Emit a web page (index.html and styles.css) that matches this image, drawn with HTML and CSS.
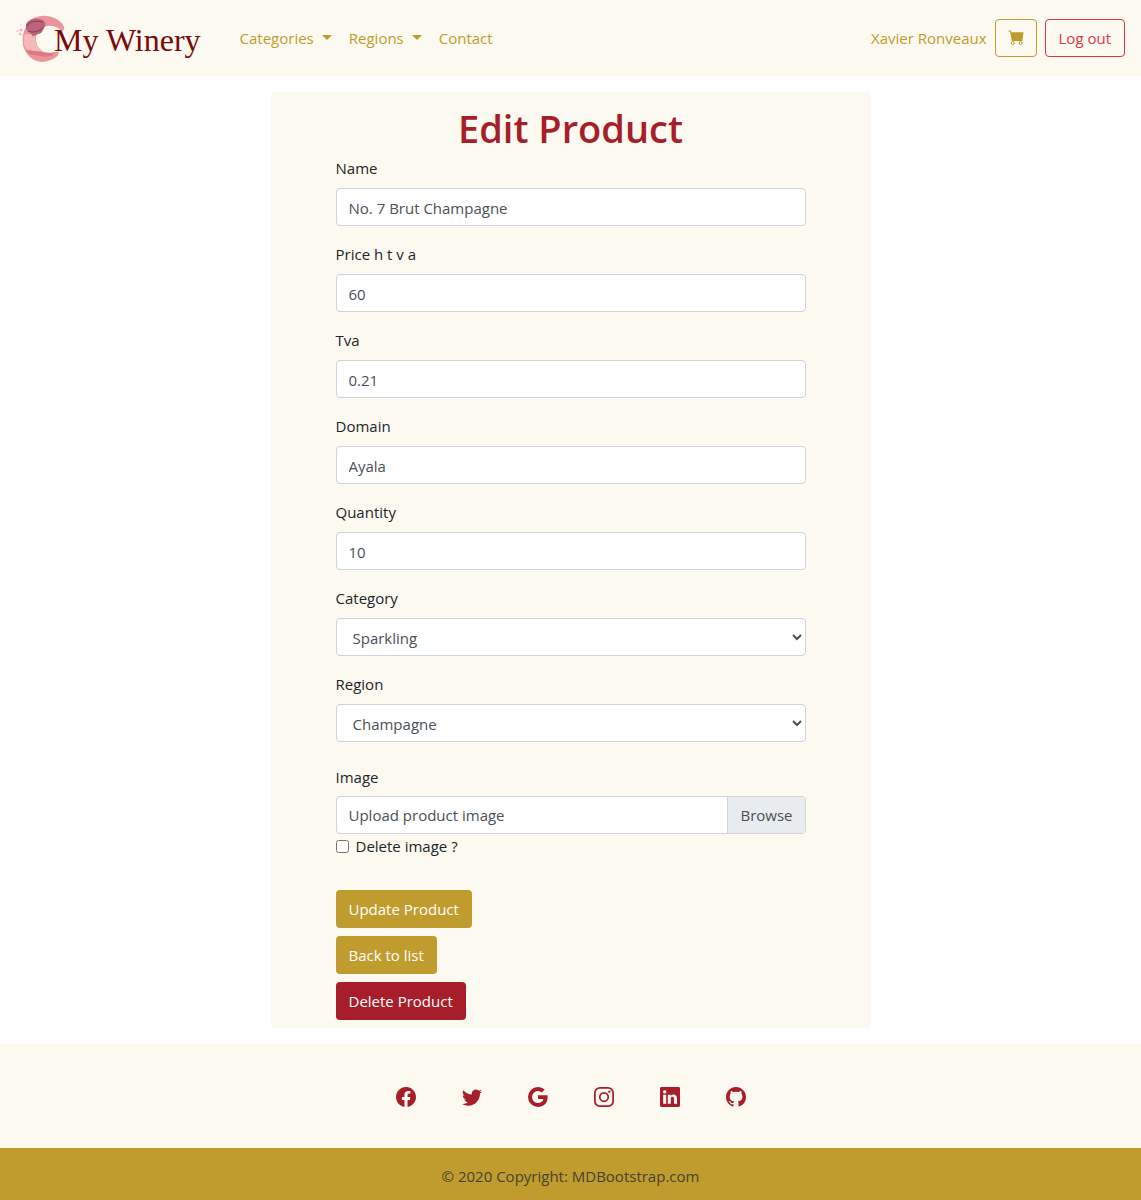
FILE: index.html
```html
<!DOCTYPE html>
<html lang="en">
<head>
<meta charset="utf-8">
<meta name="viewport" content="width=device-width, initial-scale=1">
<title>Edit Product - My Winery</title>
<link rel="stylesheet" href="styles.css">
</head>
<body>
<header class="navbar">
  <a class="brand" href="#">
    <svg class="brand-mark" viewBox="0 0 50 50" aria-hidden="true">
      <path fill="#ea959c" d="M10 14C12 8 18 4 25 3C34 2 45 6 48.500 15L47 18C42 15 37 12 32 13C24 14 20 19 20 26C20 33 24 38 30 40C35 41 38 38 43 39L42 42C39 46 32 49 25 49C16 48 9 41 7 32C6 25 7 19 10 14Z"/>
      <path fill="#f5b9b9" d="M9 21L20 21C18 27 20 33 26 38L12 38C7 33 7 27 9 21Z"/>
      <path fill="#dd7884" d="M10 37C17 37 25 40 38 40L36 43C28 45 18 42 13 41Z"/>
      <path fill="#b9647a" d="M10 11C14 5 21 4 28 8C31 12 28 15 26 19C23 22 19 21 17 24C16 20 12 20 10 16Z"/>
      <path fill="none" stroke="#8d3855" d="M10.500 14C12 9 18 7 27 9M12 18C17 20 24 19 27 14"/>
      <g fill="#f3b4b7"><circle cx="1.500" cy="18" r="1"/><circle cx="5" cy="12" r=".8"/><circle cx="5" cy="17" r="1.500"/><circle cx="4" cy="21" r="1.200"/><circle cx="7" cy="22" r="1"/></g>
    </svg>
    <span class="brand-name">My Winery</span>
  </a>
  <nav class="nav-links" aria-label="Main">
    <a class="dropdown" href="#">Categories</a>
    <a class="dropdown" href="#">Regions</a>
    <a href="#">Contact</a>
  </nav>
  <div class="account">
    <a href="#">Xavier Ronveaux</a>
    <button class="btn btn-outline-gold" type="button" aria-label="Cart">
      <svg class="icon-cart" viewBox="0 0 16 16" aria-hidden="true"><path d="M.4.500H2.400Q3 .5 3.150 1.100L3.400 2.200H15.500L14.400 11H3.800L2.100 1.500H.4Z"/><g fill="none" stroke="currentColor"><circle cx="4.800" cy="13" r="1.500"/><circle cx="12.600" cy="13" r="1.500"/></g></svg>
    </button>
    <button class="btn btn-outline-red" type="button">Log out</button>
  </div>
</header>

<main class="card">
  <h1>Edit Product</h1>
  <form class="form">
    <div class="field">
      <label for="name">Name</label>
      <input class="control" id="name" type="text" value="No. 7 Brut Champagne">
    </div>
    <div class="field">
      <label for="price">Price h t v a</label>
      <input class="control" id="price" type="text" value="60">
    </div>
    <div class="field">
      <label for="tva">Tva</label>
      <input class="control" id="tva" type="text" value="0.21">
    </div>
    <div class="field">
      <label for="domain">Domain</label>
      <input class="control" id="domain" type="text" value="Ayala">
    </div>
    <div class="field">
      <label for="quantity">Quantity</label>
      <input class="control" id="quantity" type="text" value="10">
    </div>
    <div class="field">
      <label for="category">Category</label>
      <select class="control" id="category"><option>Sparkling</option></select>
    </div>
    <div class="field">
      <label for="region">Region</label>
      <select class="control" id="region"><option>Champagne</option></select>
    </div>
    <div class="field field-image">
      <label for="image">Image</label>
      <label class="file">
        <input class="file-input" id="image" type="file">
        <span class="file-name">Upload product image</span>
        <span class="file-browse">Browse</span>
      </label>
    </div>
    <div class="check">
      <input id="delete-image" type="checkbox">
      <label for="delete-image">Delete image ?</label>
    </div>
    <div class="actions">
      <button class="btn btn-gold" type="submit">Update Product</button>
      <a class="btn btn-gold" href="#">Back to list</a>
      <button class="btn btn-red" type="button">Delete Product</button>
    </div>
  </form>
</main>

<footer class="footer">
  <div class="social">
    <a href="#" aria-label="Facebook"><svg viewBox="0 0 16 16"><path d="M16 8.049c0-4.446-3.582-8.050-8-8.050C3.580 0-.002 3.603-.002 8.050c0 4.017 2.926 7.347 6.750 7.951v-5.625h-2.030V8.050H6.750V6.275c0-2.017 1.195-3.131 3.022-3.131.876 0 1.791.157 1.791.157v1.980h-1.009c-.993 0-1.303.621-1.303 1.258v1.510h2.218l-.354 2.326H9.250V16c3.824-.604 6.750-3.934 6.750-7.951z"/></svg></a>
    <a href="#" aria-label="Twitter"><svg viewBox="0 0 16 16"><path d="M5.026 15c6.038 0 9.341-5.003 9.341-9.334 0-.14 0-.282-.006-.422A6.685 6.685 0 0 0 16 3.542a6.658 6.658 0 0 1-1.889.518 3.301 3.301 0 0 0 1.447-1.817 6.533 6.533 0 0 1-2.087.793A3.286 3.286 0 0 0 7.875 6.030a9.325 9.325 0 0 1-6.767-3.429 3.289 3.289 0 0 0 1.018 4.382A3.323 3.323 0 0 1 .64 6.575v.045a3.288 3.288 0 0 0 2.632 3.218 3.203 3.203 0 0 1-.865.115 3.230 3.230 0 0 1-.614-.057 3.283 3.283 0 0 0 3.067 2.277A6.588 6.588 0 0 1 .78 13.580a6.320 6.320 0 0 1-.78-.045A9.344 9.344 0 0 0 5.026 15z"/></svg></a>
    <a href="#" aria-label="Google"><svg viewBox="0 0 16 16"><path d="M15.545 6.558a9.420 9.420 0 0 1 .139 1.626c0 2.434-.87 4.492-2.384 5.885h.002C11.978 15.292 10.158 16 8 16A8 8 0 1 1 8 0a7.689 7.689 0 0 1 5.352 2.082l-2.284 2.284A4.347 4.347 0 0 0 8 3.166c-2.087 0-3.860 1.408-4.492 3.304a4.792 4.792 0 0 0 0 3.063h.003c.635 1.893 2.405 3.301 4.492 3.301 1.078 0 2.004-.276 2.722-.764h-.003a3.702 3.702 0 0 0 1.599-2.431H8v-3.080h7.545z"/></svg></a>
    <a href="#" aria-label="Instagram"><svg viewBox="0 0 16 16"><rect x=".7" y=".7" width="14.600" height="14.600" rx="4" fill="none" stroke="currentColor" stroke-width="1.400"/><circle cx="8" cy="8" r="3.400" fill="none" stroke="currentColor" stroke-width="1.400"/><circle cx="12.270" cy="3.730" r=".96"/></svg></a>
    <a href="#" aria-label="LinkedIn"><svg viewBox="0 0 16 16"><path d="M0 1.146C0 .513.526 0 1.175 0h13.650C15.474 0 16 .513 16 1.146v13.708c0 .633-.526 1.146-1.175 1.146H1.175C.526 16 0 15.487 0 14.854V1.146zm4.943 12.248V6.169H2.542v7.225h2.401zm-1.200-8.212c.837 0 1.358-.554 1.358-1.248-.015-.709-.52-1.248-1.342-1.248-.822 0-1.359.54-1.359 1.248 0 .694.521 1.248 1.327 1.248h.016zm4.908 8.212V9.359c0-.216.016-.432.08-.586.173-.431.568-.878 1.232-.878.869 0 1.216.662 1.216 1.634v3.865h2.401V9.250c0-2.220-1.184-3.252-2.764-3.252-1.274 0-1.845.7-2.165 1.193v.025h-.016a5.540 5.540 0 0 1 .016-.025V6.169h-2.400c.03.678 0 7.225 0 7.225h2.400z"/></svg></a>
    <a href="#" aria-label="GitHub"><svg viewBox="0 0 16 16"><path d="M8 0C3.580 0 0 3.580 0 8c0 3.540 2.290 6.530 5.470 7.590.4.070.55-.17.55-.38 0-.19-.01-.82-.01-1.490-2.010.37-2.530-.49-2.690-.94-.09-.23-.48-.94-.82-1.130-.28-.15-.68-.52-.01-.53.63-.01 1.080.58 1.230.82.72 1.210 1.870.87 2.330.66.07-.52.28-.87.51-1.070-1.780-.2-3.640-.89-3.640-3.950 0-.87.31-1.590.82-2.150-.08-.2-.36-1.020.08-2.120 0 0 .67-.21 2.200.82.64-.18 1.320-.27 2-.27.68 0 1.360.09 2 .27 1.530-1.040 2.200-.82 2.200-.82.44 1.100.16 1.920.08 2.120.51.56.82 1.270.82 2.150 0 3.070-1.870 3.750-3.650 3.950.29.25.54.73.54 1.480 0 1.070-.01 1.930-.01 2.200 0 .21.15.46.55.38A8.012 8.012 0 0 0 16 8c0-4.420-3.580-8-8-8z"/></svg></a>
  </div>
  <div class="copyright">© 2020 Copyright: <a href="#">MDBootstrap.com</a></div>
</footer>
</body>
</html>
```
FILE: styles.css
```css
:root {
  --cream: #fcf9f1;
  --gold: #c09c2e;
  --wine: #a71d2a;
  --danger: #dc3545;
  --ink: #212529;
  --muted: #495057;
  --line: #ced4da;
}

*, *::before, *::after { box-sizing: border-box; }

body {
  margin: 0;
  background: #fff;
  color: var(--ink);
  font-family: "Open Sans", "Noto Sans", sans-serif;
  font-size: 15px;
  line-height: 24px;
}

a { color: inherit; text-decoration: none; }

.navbar {
  display: flex;
  align-items: center;
  min-height: 76px;
  padding: 8px 16px;
  background: var(--cream);
  color: var(--gold);
}

.brand { display: flex; align-items: center; }
.brand-mark { width: 50px; height: 50px; }
.brand-name {
  margin-left: -12px;
  padding-top: 3px;
  color: #7a0a0a;
  font-family: "Liberation Serif", serif;
  font-size: 32px;
  line-height: 40px;
}

.nav-links { display: flex; gap: 17px; margin-left: 39px; }

.dropdown::after {
  content: "";
  display: inline-block;
  margin-left: 8px;
  vertical-align: 4px;
  border-top: 5px solid;
  border-right: 5px solid transparent;
  border-left: 5px solid transparent;
}

.account { display: flex; align-items: center; gap: 8px; margin-left: auto; }

.btn {
  display: inline-flex;
  align-items: center;
  height: 38px;
  padding: 0 12px;
  border: 1px solid transparent;
  border-radius: 4px;
  background: transparent;
  font: inherit;
  cursor: pointer;
}
.btn-outline-gold { border-color: var(--gold); color: var(--gold); }
.btn-outline-red { padding: 0 13px; border-color: var(--danger); color: var(--danger); }
.btn-gold { background: var(--gold); color: #fff; }
.btn-red { background: var(--wine); color: #fff; }

.icon-cart { width: 16px; height: 16px; fill: currentColor; }

.card {
  max-width: 600px;
  margin: 16px auto;
  padding: 8px 65px;
  border-radius: 4px;
  background: var(--cream);
}

h1 {
  margin: 0 0 4px;
  padding-top: 4px;
  color: var(--wine);
  font-size: 38px;
  font-weight: 600;
  line-height: 48px;
  text-align: center;
}

.field { display: flex; flex-direction: column; gap: 8px; margin-bottom: 16px; }

.control {
  width: 100%;
  height: 38px;
  padding: 2px 12px 0;
  border: 1px solid var(--line);
  border-radius: 4px;
  background: #fff;
  color: var(--muted);
  font: inherit;
}
select.control { padding: 2px 0 0 12px; }

.field-image { gap: 7px; margin: 23px 0 0; }

.file {
  display: flex;
  position: relative;
  height: 38px;
  overflow: hidden;
  border: 1px solid var(--line);
  border-radius: 4px;
  background: #fff;
  color: var(--muted);
  line-height: 36px;
}
.file-input { position: absolute; inset: 0; opacity: 0; }
.file-name { flex: 1; padding: 0 12px; }
.file-browse { padding: 0 12px; border-left: 1px solid var(--line); background: #e9ecef; }

.check { display: flex; align-items: center; gap: 7px; }
.check input { width: 13px; height: 13px; margin: 0; }

.actions {
  display: flex;
  flex-direction: column;
  align-items: flex-start;
  gap: 8px;
  margin-top: 32px;
}

.footer { background: var(--cream); }

.social {
  display: flex;
  flex-wrap: wrap;
  justify-content: center;
  gap: 46px;
  padding: 43px 16px 41px;
  color: var(--wine);
}
.social svg { display: block; width: 20px; height: 20px; fill: currentColor; }

.copyright {
  padding: 16px 16px 12px;
  background: var(--gold);
  color: #46432b;
  text-align: center;
}
```
